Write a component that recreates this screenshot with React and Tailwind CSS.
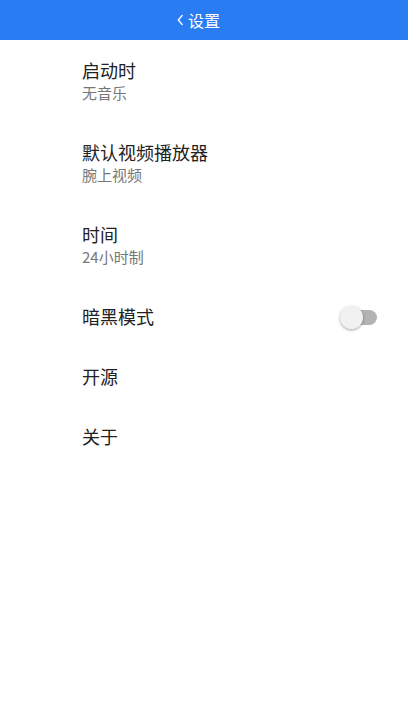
export default function App() {
  const font = { fontFamily: '"Noto Sans CJK SC", "Noto Sans", sans-serif' };
  return (
    <div className="w-[408px] h-[725px] bg-white" style={font}>
      <div className="h-10 bg-[#2a7cf2] flex items-center justify-center text-white">
        <span className="relative text-[16px] leading-none">
          <svg width="7" height="12" viewBox="0 0 7 12" className="absolute left-[-11px] top-[2px]">
            <path d="M5.5 1 L1.3 6 L5.5 11" stroke="white" strokeWidth="1.3" fill="none" />
          </svg>
          设置
        </span>
      </div>
      <div className="pl-[82px] pr-[31px]">
        {[
          ["启动时", "无音乐"],
          ["默认视频播放器", "腕上视频"],
          ["时间", "24小时制"],
        ].map(([t, s]) => (
          <div key={t} className="h-[82px] flex flex-col justify-center">
            <div className="text-[18px] leading-[24px] text-[#222]">{t}</div>
            <div className="text-[15px] leading-[22px] text-[#777]">{s}</div>
          </div>
        ))}
        <div className="h-[60px] flex items-center justify-between">
          <div className="text-[18px] leading-[24px] text-[#222]">暗黑模式</div>
          <div className="relative w-[37px] h-[23px] mt-[3px]">
            <div className="absolute right-0 top-[4px] w-[34px] h-[15px] rounded-full bg-[#b3b3b3]" />
            <div className="absolute left-0 top-0 w-[23px] h-[23px] rounded-full bg-[#f1f1f1] shadow-[0_1px_3px_rgba(0,0,0,0.35)]" />
          </div>
        </div>
        {["开源", "关于"].map((t) => (
          <div key={t} className="h-[60px] flex items-center">
            <div className="text-[18px] leading-[24px] text-[#222]">{t}</div>
          </div>
        ))}
      </div>
    </div>
  );
}
